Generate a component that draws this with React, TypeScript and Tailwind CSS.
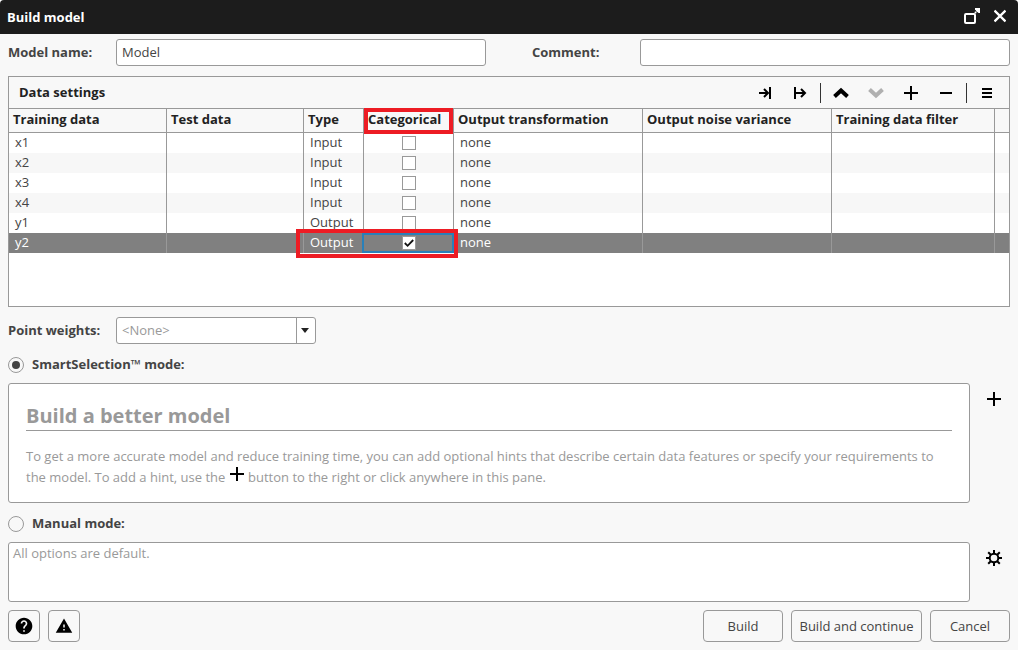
import React, { useState } from 'react';
import { MdHelp, MdWarning } from 'react-icons/md';

const COLUMNS = [
  { title: 'Training data', width: 'w-[158px]' },
  { title: 'Test data', width: 'w-[137px]' },
  { title: 'Type', width: 'w-[60px]' },
  { title: 'Categorical', width: 'w-[90px]' },
  { title: 'Output transformation', width: 'w-[189px]' },
  { title: 'Output noise variance', width: 'w-[189px]' },
  { title: 'Training data filter', width: 'w-[163px]' },
];

const INITIAL_ROWS = [
  { name: 'x1', type: 'Input', categorical: false },
  { name: 'x2', type: 'Input', categorical: false },
  { name: 'x3', type: 'Input', categorical: false },
  { name: 'x4', type: 'Input', categorical: false },
  { name: 'y1', type: 'Output', categorical: false },
  { name: 'y2', type: 'Output', categorical: true },
];

const ICONS = {
  toEnd: { d: 'M2 9H11M7 5L11 9L7 13M13 3V15', stroke: 2 },
  fromStart: { d: 'M4 9H13M9 5L13 9L9 13M3 3V15', stroke: 2 },
  up: { d: 'M1.5 12.5L8 6.5L14.5 12.5', stroke: 4 },
  down: { d: 'M1.5 5.5L8 11.5L14.5 5.5', stroke: 4 },
  plus: { d: 'M1 9H15M8 2V16', stroke: 2 },
  minus: { d: 'M2 9H14', stroke: 2 },
  menu: { d: 'M3 5H13M3 9H13M3 13H13', stroke: 2 },
};

function Icon({ name }: { name: keyof typeof ICONS }) {
  const icon = ICONS[name];
  return (
    <svg width="17" height="17" viewBox="0 0 17 17" fill="none" stroke="currentColor" strokeWidth={icon.stroke} aria-hidden>
      <path d={icon.d} />
    </svg>
  );
}

function ToolButton({ name, label, disabled }: { name: keyof typeof ICONS; label: string; disabled?: boolean }) {
  return (
    <button
      type="button"
      aria-label={label}
      disabled={disabled}
      className="flex h-full w-[35px] items-center justify-center text-black disabled:text-[#b0b0b0]"
    >
      <Icon name={name} />
    </button>
  );
}

function Separator() {
  return <span className="ml-[2px] mr-[3px] h-5 w-px bg-[#333]" />;
}

function PlusIcon({ className }: { className?: string }) {
  return (
    <svg width="14" height="14" viewBox="0 0 14 14" stroke="#000" strokeWidth="2" className={className} aria-hidden>
      <path d="M0 7H14M7 0V14" />
    </svg>
  );
}

function GearIcon() {
  return (
    <svg width="16" height="16" viewBox="0 0 16 16" fill="none" stroke="#000" strokeWidth="2" aria-hidden>
      <circle cx="8" cy="8" r="4.3" />
      <path d="M8 0V3.5M8 12.5V16M0 8H3.5M12.5 8H16M2.2 2.2L4.8 4.8M11.2 11.2L13.8 13.8M2.2 13.8L4.8 11.2M11.2 4.8L13.8 2.2" />
    </svg>
  );
}

function ModeRadio({ id, label, checked, onChange }: { id: string; label: string; checked: boolean; onChange: () => void }) {
  return (
    <div className="flex h-5 items-center gap-2">
      <span className="relative flex">
        <input
          id={id}
          type="radio"
          name="mode"
          checked={checked}
          onChange={onChange}
          className="peer size-4 appearance-none rounded-full border border-[#999] bg-[#f8f8f8]"
        />
        <span className="pointer-events-none absolute inset-1 hidden rounded-full bg-[#444] peer-checked:block" />
      </span>
      <label htmlFor={id} className="pb-[2px] font-bold">{label}</label>
    </div>
  );
}

const labelClass = 'w-[108px] pb-[2px] font-bold';
const inputClass = 'h-[27px] min-w-0 flex-1 rounded-[3px] border border-[#999] bg-white px-[5px] pb-[2px] outline-none';
const buttonClass = 'flex h-8 items-center justify-center rounded-[4px] border border-[#999]';

export default function App() {
  const [name, setName] = useState('Model');
  const [comment, setComment] = useState('');
  const [rows, setRows] = useState(INITIAL_ROWS);
  const [selected, setSelected] = useState('y2');
  const [mode, setMode] = useState('smart');

  const toggle = (rowName: string) => {
    setRows(rows.map((r) => (r.name === rowName ? { ...r, categorical: !r.categorical } : r)));
  };

  return (
    <div className="min-h-screen overflow-hidden rounded-t-[4px] bg-[#f8f8f8] font-['Open_Sans',sans-serif] text-[13px] leading-5 text-[#444]">
      <header className="flex h-[34px] items-center justify-between bg-[#1c1c1c] pl-[7px] pr-3 text-white">
        <h1 className="font-bold">Build model</h1>
        <div className="flex items-center gap-[14px] pb-[2px]">
          <button type="button" aria-label="Maximize">
            <svg width="16" height="16" viewBox="0 0 16 16" fill="none" stroke="currentColor" aria-hidden>
              <rect x="1" y="6" width="10" height="9" rx="1" strokeWidth="2" />
              <path d="M11 5L14 2" strokeWidth="2" strokeDasharray="1.5 0.7" />
              <path d="M11 0H16V5H14.5L11 1.5Z" fill="currentColor" stroke="none" />
            </svg>
          </button>
          <button type="button" aria-label="Close">
            <svg width="12" height="16" viewBox="0 0 12 16" stroke="currentColor" strokeWidth="2.4" aria-hidden>
              <path d="M0.5 2.5L11.5 13.5M11.5 2.5L0.5 13.5" />
            </svg>
          </button>
        </div>
      </header>

      <main className="px-2 pt-[5px]">
        <div className="flex gap-[46px]">
          <div className="flex flex-1 items-center">
            <label htmlFor="model-name" className={labelClass}>Model name:</label>
            <input id="model-name" value={name} onChange={(e) => setName(e.target.value)} className={inputClass} />
          </div>
          <div className="flex flex-1 items-center">
            <label htmlFor="comment" className={labelClass}>Comment:</label>
            <input id="comment" value={comment} onChange={(e) => setComment(e.target.value)} className={inputClass} />
          </div>
        </div>

        <section className="mt-[10px] min-h-[231px] border border-[#999] bg-white">
          <div className="flex h-8 items-center justify-between border-b border-[#999] bg-[#f8f8f8] pl-[10px] pr-1">
            <h2 className="pb-[2px] font-bold text-[#222]">Data settings</h2>
            <div className="flex h-full items-center">
              <ToolButton name="toEnd" label="Move to test data" />
              <ToolButton name="fromStart" label="Move to training data" />
              <Separator />
              <ToolButton name="up" label="Move up" />
              <ToolButton name="down" label="Move down" disabled />
              <ToolButton name="plus" label="Add row" />
              <ToolButton name="minus" label="Remove row" />
              <Separator />
              <ToolButton name="menu" label="Menu" />
            </div>
          </div>

          <table className="w-full table-fixed border-separate border-spacing-0">
            <thead>
              <tr className="h-6 bg-[#f8f8f8] text-left text-[#222]">
                {COLUMNS.map((col) => (
                  <th
                    key={col.title}
                    className={`${col.width} relative whitespace-nowrap border-b border-r border-[#999] p-0 pl-1 align-top font-bold`}
                  >
                    {col.title}
                    {col.title === 'Categorical' && (
                      <span className="pointer-events-none absolute inset-x-0 -top-px -bottom-[2px] z-10 border-4 border-[#ed1c24]" />
                    )}
                  </th>
                ))}
                <th className="border-b border-[#999] p-0" />
              </tr>
            </thead>
            <tbody>
              {rows.map((row) => {
                const active = row.name === selected;
                const cell = 'h-5 border-r border-[#999] p-0 pl-[6px] align-top leading-[18px]';
                return (
                  <tr
                    key={row.name}
                    onClick={() => setSelected(row.name)}
                    className={active ? 'bg-[#808080] text-white' : 'even:bg-[#f7f7f7]'}
                  >
                    <td className={cell}>{row.name}</td>
                    <td className={cell} />
                    <td className={`${cell} relative`}>
                      {row.type}
                      {active && (
                        <span className="pointer-events-none absolute -left-2 -top-1 z-10 h-[29px] w-[162px] border-4 border-[#ed1c24]" />
                      )}
                    </td>
                    <td className="relative h-5 border-r border-[#999] p-0">
                      {active && <span className="pointer-events-none absolute -left-[2px] -right-px inset-y-0 border-2 border-[#2980b9]" />}
                      <span className="relative flex justify-center">
                        <input
                          type="checkbox"
                          aria-label={`${row.name} categorical`}
                          checked={row.categorical}
                          onChange={() => toggle(row.name)}
                          className="peer size-[14px] appearance-none border border-[#999] bg-white"
                        />
                        <svg
                          width="14"
                          height="14"
                          viewBox="0 0 14 14"
                          fill="none"
                          stroke="#111"
                          strokeWidth="1.8"
                          className="pointer-events-none absolute hidden peer-checked:block"
                          aria-hidden
                        >
                          <path d="M2.8 7L5.6 9.8L11.2 4" />
                        </svg>
                      </span>
                    </td>
                    <td className={cell}>none</td>
                    <td className={cell} />
                    <td className={cell} />
                    <td className="p-0" />
                  </tr>
                );
              })}
            </tbody>
          </table>
        </section>

        <div className="mt-[10px] flex items-center">
          <label htmlFor="weights" className={labelClass}>Point weights:</label>
          <div className="relative w-[200px]">
            <select
              id="weights"
              className="block h-[27px] w-full appearance-none rounded-[3px] border border-[#999] bg-white px-[5px] pb-[2px] text-[#999] outline-none"
            >
              <option>&lt;None&gt;</option>
            </select>
            <span className="pointer-events-none absolute inset-y-0 right-0 flex w-5 items-center justify-center border-l border-[#999] pr-[3px]">
              <svg width="8" height="5" viewBox="0 0 8 5" fill="#222" aria-hidden>
                <path d="M0 0H8L4 5Z" />
              </svg>
            </span>
          </div>
        </div>

        <div className="mt-[11px]">
          <ModeRadio id="smart" label="SmartSelection™ mode:" checked={mode === 'smart'} onChange={() => setMode('smart')} />
        </div>
        <div className="mt-2 flex items-start">
          <div className="flex-1 rounded-[3px] border border-[#999] bg-white px-[17px] pb-[14px] pt-[18px] text-[#999]">
            <h2 className="border-b border-[#999] text-xl leading-7 font-bold">Build a better model</h2>
            <p className="mt-[15px] leading-[21px]">
              To get a more accurate model and reduce training time, you can add optional hints that describe certain data
              features or specify your requirements to the model. To add a hint, use the{' '}
              <PlusIcon className="mx-px mb-px inline-block align-baseline" /> button to the right or click anywhere in this
              pane.
            </p>
          </div>
          <button type="button" aria-label="Add hint" className="flex h-8 w-10 items-center justify-center pl-2">
            <PlusIcon />
          </button>
        </div>

        <div className="mt-[11px]">
          <ModeRadio id="manual" label="Manual mode:" checked={mode === 'manual'} onChange={() => setMode('manual')} />
        </div>
        <div className="mt-2 flex items-start">
          <textarea
            readOnly
            aria-label="Manual mode options"
            value="All options are default."
            className="block h-[60px] flex-1 resize-none rounded-[3px] border border-[#999] bg-white px-1 text-[#999] outline-none"
          />
          <button type="button" aria-label="Options" className="flex h-8 w-10 items-center justify-center pl-2">
            <GearIcon />
          </button>
        </div>

        <footer className="mt-2 flex gap-2">
          <button type="button" aria-label="Help" className={`${buttonClass} w-8 text-black`}>
            <MdHelp size={20} />
          </button>
          <button type="button" aria-label="Warnings" className={`${buttonClass} w-8 text-black`}>
            <MdWarning size={18} />
          </button>
          <button type="button" className={`${buttonClass} ml-auto w-20`}>Build</button>
          <button type="button" className={`${buttonClass} w-[131px]`}>Build and continue</button>
          <button type="button" className={`${buttonClass} w-20`}>Cancel</button>
        </footer>
      </main>
    </div>
  );
}
